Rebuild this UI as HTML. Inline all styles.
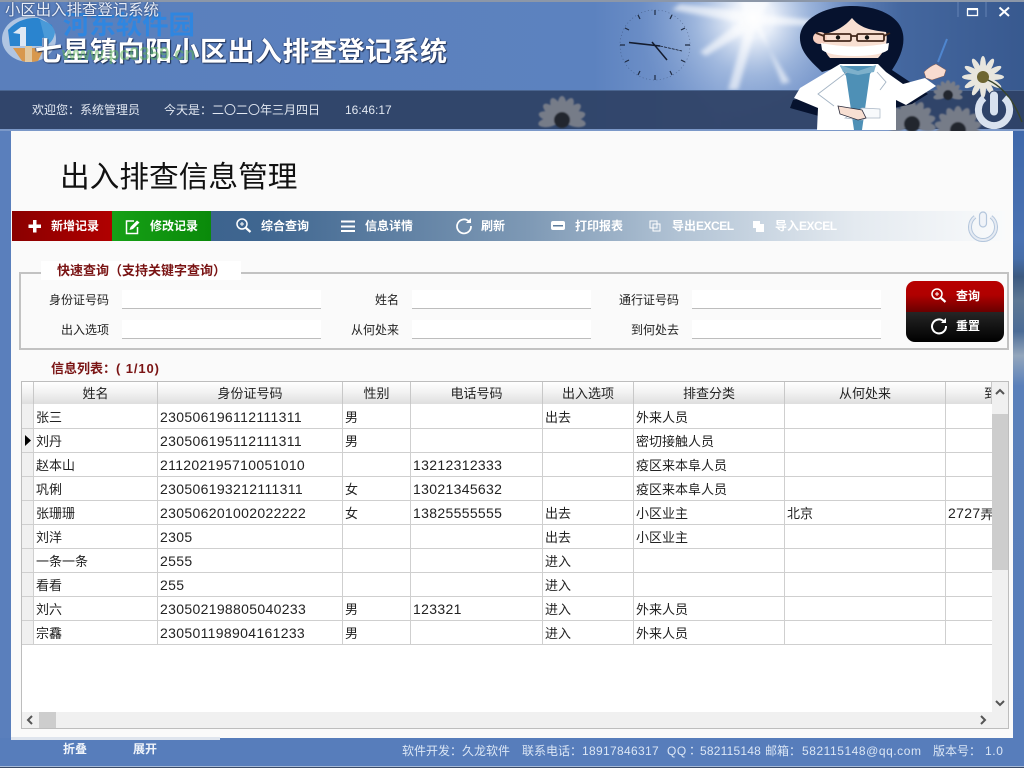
<!DOCTYPE html>
<html lang="zh"><head><meta charset="utf-8"><title>小区出入排查登记系统</title>
<style>
*{box-sizing:border-box}
html,body{margin:0;padding:0;width:1024px;height:768px;overflow:hidden;background:#577dbb;font-family:"Liberation Sans","Noto Sans CJK SC",sans-serif;color:#222}
.a{position:absolute;white-space:nowrap}
svg{position:absolute;display:block}
.p{font-family:"Noto Sans CJK TC",sans-serif}
.tb{color:#fff;font-size:12px;font-weight:bold;top:218px;line-height:16px}
.tb i{font-style:normal;letter-spacing:-.5px}
.lb{font-size:12px;color:#222;line-height:16px;text-align:right}
.fd{background:#fff;border-bottom:1px solid #bdbdbd;height:19px}
.hd{position:absolute;top:382px;height:22px;background:linear-gradient(#fff,#f1f1f1 50%,#dedede);border-right:1px solid #c8c8c8;font-size:13px;line-height:23px;text-align:center;color:#222}
.c{position:absolute;font-size:13px;line-height:26px;height:24px;color:#222;white-space:nowrap;overflow:hidden}
.c b{font-weight:normal;font-size:14px;letter-spacing:.33px;position:relative;top:-1px}
.hl{position:absolute;left:22px;width:970px;height:1px;background:#cfcfcf}
.vl{position:absolute;top:404px;height:241px;width:1px;background:#cfcfcf}
.ft{font-size:12px;color:#dbe6f5;top:743px;line-height:16px}
</style></head>
<body>
<svg style="left:0;top:0" width="1024" height="132" viewBox="0 0 1024 132">
<defs>
<linearGradient id="bg" x1="0" x2="1" y1="0" y2="0"><stop offset="0" stop-color="#5a7fbc"/><stop offset=".58" stop-color="#5c82bf"/><stop offset=".7" stop-color="#7f9dd0"/><stop offset=".8" stop-color="#6f8fc6"/><stop offset=".88" stop-color="#44679f"/><stop offset="1" stop-color="#38598f"/></linearGradient>
<radialGradient id="sun" cx="753" cy="18" r="115" gradientUnits="userSpaceOnUse"><stop offset="0" stop-color="#fff"/><stop offset=".18" stop-color="#eef3fb" stop-opacity=".95"/><stop offset=".5" stop-color="#bccfea" stop-opacity=".55"/><stop offset="1" stop-color="#88a6d4" stop-opacity="0"/></radialGradient>
<filter id="b" x="-30%" y="-30%" width="160%" height="160%"><feGaussianBlur stdDeviation="2.200"/></filter>
<filter id="s" x="-20%" y="-20%" width="140%" height="140%"><feGaussianBlur stdDeviation=".9"/></filter>
<g id="pw"><ellipse cy="-11" rx="3" ry="10" fill="#e8e6de"/></g>
<g id="daisy"><use href="#pw"/><use href="#pw" transform="rotate(30)"/><use href="#pw" transform="rotate(60)"/><use href="#pw" transform="rotate(90)"/><use href="#pw" transform="rotate(120)"/><use href="#pw" transform="rotate(150)"/><use href="#pw" transform="rotate(180)"/><use href="#pw" transform="rotate(210)"/><use href="#pw" transform="rotate(240)"/><use href="#pw" transform="rotate(270)"/><use href="#pw" transform="rotate(300)"/><use href="#pw" transform="rotate(330)"/><circle r="6" fill="#6e6632"/></g>
<g id="pd"><ellipse cy="-14" rx="4.500" ry="10" fill="#767b88"/></g>
<g id="ddaisy" filter="url(#s)"><use href="#pd"/><use href="#pd" transform="rotate(25)"/><use href="#pd" transform="rotate(50)"/><use href="#pd" transform="rotate(75)"/><use href="#pd" transform="rotate(100)"/><use href="#pd" transform="rotate(260)"/><use href="#pd" transform="rotate(285)"/><use href="#pd" transform="rotate(310)"/><use href="#pd" transform="rotate(335)"/><circle r="8" fill="#23272f"/></g>
</defs>
<rect width="1024" height="132" fill="url(#bg)"/>
<rect x="600" y="0" width="310" height="132" fill="url(#sun)"/>
<g fill="#fff" opacity=".62" filter="url(#b)">
<polygon points="748,20 728,90 738,90 758,20"/><polygon points="748,16 790,82 782,84 760,24"/><polygon points="750,12 680,4 672,10 750,24"/><polygon points="750,14 700,52 706,56 758,24"/><polygon points="752,14 815,20 815,26 752,24"/><polygon points="745,18 740,0 770,0 760,18"/>
</g>
<rect x="0" y="90" width="1024" height="40" fill="#2f4266" opacity=".94"/>
<rect x="0" y="90" width="1024" height="1" fill="#4a6590"/>
<rect x="0" y="129" width="1024" height="2" fill="#7b98c8"/>
<!-- watermark logo -->
<ellipse cx="29" cy="39" rx="27" ry="23" fill="#b9cde6" opacity=".9"/>
<path d="M8 30Q20 17 38 18L52 25 54 36 42 38V46H10Z" fill="#2a84cf"/>
<path d="M40 20Q52 22 55 32 54 42 44 47V36Z" fill="#4a9ad8"/>
<path d="M13 48H44L38 61Q30 63 22 61Z" fill="#d8984e"/>
<path d="M25 46H32V62H25Z" fill="#e2c8a0"/>
<path d="M13 33L21 27H26V46H20V34Z" fill="#dfe8f4"/>
<!-- clock -->
<g transform="translate(655,45)">
<circle r="35" fill="none" stroke="#2c3c5c" stroke-width=".6" stroke-dasharray="1 2.500" opacity=".6"/>
<g stroke="#1e2a40" stroke-width="1.200" fill="none">
<path d="M0-35v5M17-30l-2 4M30-17l-4 2M35 0h-5M30 17l-4-2M17 30l-2-4M0 35v-5M-17 30l2-4M-30 17l4-2M-35 0h5M-30-17l4 2M-17-30l2 4"/>
</g>
<path d="M-26-2.500L5 1" stroke="#141c2e" stroke-width="1.600"/>
<path d="M-3-3L12 15" stroke="#141c2e" stroke-width="1.500"/>
<path d="M5 1L27 6" stroke="#141c2e" stroke-width=".8" stroke-dasharray="3 1"/>
</g>
<!-- flowers -->
<use href="#ddaisy" x="562" y="120"/>
<use href="#ddaisy" x="912" y="124"/>
<use href="#ddaisy" x="958" y="130"/>
<use href="#ddaisy" transform="translate(948,95) scale(.62)"/>
<use href="#daisy" transform="translate(983,77)"/>
<path d="M988 80Q1010 90 1022 122" stroke="#39452c" stroke-width="1.500" fill="none"/>
<!-- doctor -->
<path d="M852 6C826 6 802 18 800 36C799 52 812 62 822 72L836 68 830 92 793 100 790 108 826 118 885 110 912 104 928 94 892 70C900 58 905 46 903 34C900 16 878 6 852 6Z" fill="#06122e"/>
<path d="M852 18C845 26 836 32 824 34C822 42 824 52 830 58H878C886 50 888 40 886 32C870 30 860 28 852 18Z" fill="#f8dfd2"/>
<ellipse cx="820" cy="38" rx="7" ry="6" fill="#f6cfc0"/>
<path d="M821 43Q855 50 889 43L888 50Q880 56 855 56Q830 56 822 50Z" fill="#fff"/>
<g fill="none" stroke="#43281c" stroke-width="1.800"><rect x="824" y="34" width="27" height="7" rx="1.500"/><rect x="857" y="34" width="27" height="7" rx="1.500"/><path d="M851 36h6M816 33l8 3M884 36l6-3"/></g>
<circle cx="838" cy="37.500" r="2.200" fill="#111"/><circle cx="867" cy="37.500" r="2.200" fill="#111"/>
<path d="M840 64L878 64 886 72 903 84 925 78 936 86 906 105 896 100 896 130H817L818 108 794 98 800 88Z" fill="#fff"/>
<path d="M840 66H876L870 74 862 130H854L846 76Z" fill="#4e90b6"/>
<path d="M840 65L858 71 876 65 874 72 858 75 843 72Z" fill="#7db0cb"/>
<path d="M847 72L818 94 834 106M877 72L886 82 880 90" stroke="#a4b4c4" stroke-width=".9" fill="none"/>
<path d="M845 118L862 108 880 109V118H866L862 120Z" fill="#f8fafc" stroke="#a8b5c4" stroke-width=".7"/>
<path d="M838 106Q850 108 862 110L866 118 858 120 840 114Z" fill="#f8dfd2" stroke="#2a2a3a" stroke-width=".8"/>
<path d="M924 72Q930 66 936 64L946 70 944 76 932 80 926 78Z" fill="#f8dcd0" stroke="#8a5e50" stroke-width=".5"/>
<path d="M938 62L947 39" stroke="#4f86cf" stroke-width="2"/>
<!-- power -->
<path d="M984 98A15.600 15.600 0 1 0 1004 98" fill="none" stroke="#d9e2ef" stroke-width="7"/>
<rect x="989.500" y="91" width="9" height="25" rx="4.500" fill="#d9e2ef" stroke="#2f4266" stroke-width="1"/>
<!-- window controls -->
<path d="M958 2V17M986 2V17" stroke="#6f8cbd" stroke-width=".8"/>
<rect x="967.500" y="9.500" width="10" height="6" fill="none" stroke="#fff" stroke-width="1.300"/><path d="M967 9h11" stroke="#fff" stroke-width="2"/>
<path d="M999.500 7.500L1009 16M1009 7.500L999.500 16" stroke="#fff" stroke-width="2"/>
<path d="M0 1H1024" stroke="#8c97a8" stroke-width="2"/>
</svg>

<div class="a" style="left:63px;top:7px;font-size:26.400px;line-height:36px;font-weight:bold;color:#2f86e0">河东软件园</div>
<div class="a" style="left:5px;top:1px;font-size:15.400px;line-height:20px;color:#e8eef8;text-shadow:0 0 2px #26365a">小区出入排查登记系统</div>
<div class="a" style="left:35px;top:33px;font-size:27px;line-height:38px;color:#fff;font-weight:bold;letter-spacing:.5px;text-shadow:1px 1px 1px #1e2e50,-1px 0 1px #3a5288">七星镇向阳小区出入排查登记系统</div>
<div class="a" style="left:62px;top:44px;font-size:18px;line-height:20px;font-weight:bold;color:#5fb25a;opacity:.55">www.pc0359.cn</div>
<div class="a" style="left:32px;top:102px;font-size:12px;line-height:16px;color:#e2e8f2">欢迎您<span class="p">：</span>系统管理员</div>
<div class="a" style="left:164px;top:102px;font-size:12px;line-height:16px;color:#e2e8f2">今天是<span class="p">：</span>二〇二〇年三月四日</div>
<div class="a" style="left:345px;top:102px;font-size:12px;line-height:16px;color:#e2e8f2">16:46:17</div>

<div class="a" style="left:0;top:131px;width:11px;height:607px;background:#5a7fbc"></div>
<div class="a" style="left:1013px;top:131px;width:11px;height:607px;background:linear-gradient(#3f68aa,#4a72b2 18%,#476ea8 21%,#3d5a80 24%,#5e7894 28%,#4c6c96 33%,#93a6bc 37%,#5a80ba 42%,#577dbb)"></div>
<div class="a" style="left:11px;top:131px;width:1002px;height:607px;background:#fafafa"></div>
<div class="a" style="left:11px;top:737px;width:209px;height:3px;background:#dfe5ee"></div>

<div class="a" style="left:60px;top:158px;font-size:29.700px;line-height:40px;color:#111">出入排查信息管理</div>

<div class="a" style="left:12px;top:211px;width:993px;height:30px;background:linear-gradient(90deg,#345a87 0,#3f6690 25%,#7e99b5 52%,#b4c5d6 68%,#e4eaf0 85%,#f9fafb 100%)"></div>
<div class="a" style="left:12px;top:211px;width:100px;height:30px;background:linear-gradient(90deg,#8a0000,#b00000)"></div>
<div class="a" style="left:112px;top:211px;width:99px;height:30px;background:linear-gradient(90deg,#16a016,#0a8a0a)"></div>
<svg style="left:26px;top:217px" width="16" height="18"><path d="M7 3H10.500V7.500H15V11H10.500V15.500H7V11H2.500V7.500H7Z" fill="#fff"/></svg>
<div class="a tb" style="left:51px">新增记录</div>
<svg style="left:124px;top:218px" width="18" height="18"><path d="M10 3H2.500V15.500H13.500V9" fill="none" stroke="#fff" stroke-width="1.500"/><path d="M5.500 12L6.500 9 13 2.500 15.500 4.500 9 11Z" fill="#fff"/></svg>
<div class="a tb" style="left:150px">修改记录</div>
<svg style="left:235px;top:217px" width="18" height="18"><circle cx="7" cy="7" r="5" fill="none" stroke="#fff" stroke-width="1.500"/><path d="M5 7h4M7 5v4" stroke="#fff"/><path d="M11 11l4.500 4" stroke="#fff" stroke-width="2.200"/></svg>
<div class="a tb" style="left:261px">综合查询</div>
<svg style="left:340px;top:218px" width="16" height="16"><path d="M1 3.500H15M1 8.500H15M1 13H15" stroke="#fff" stroke-width="2"/></svg>
<div class="a tb" style="left:365px">信息详情</div>
<svg style="left:455px;top:217px" width="18" height="18"><path d="M14 4.500A7 7 0 1 0 16 9" fill="none" stroke="#fff" stroke-width="1.700"/><path d="M16 1V6H11Z" fill="#fff"/></svg>
<div class="a tb" style="left:481px">刷新</div>
<svg style="left:550px;top:219px" width="16" height="14"><rect x="1" y="2" width="14" height="9" rx="2" fill="#fff"/><rect x="3" y="6" width="10" height="1.500" fill="#5d7c9c"/></svg>
<div class="a tb" style="left:575px">打印报表</div>
<svg style="left:649px;top:220px" width="12" height="12"><rect x="1" y="1" width="7" height="7" fill="none" stroke="#fff"/><rect x="4" y="4" width="7" height="7" fill="none" stroke="#fff"/></svg>
<div class="a tb" style="left:672px">导出<i>EXCEL</i></div>
<svg style="left:752px;top:220px" width="13" height="13"><rect x="1" y="1" width="7" height="7" fill="#fff"/><rect x="4" y="4" width="8" height="8" fill="#fff"/></svg>
<div class="a tb" style="left:775px">导入<i>EXCEL</i></div>
<svg style="left:967px;top:211px" width="32" height="31"><path d="M8 5.800A13 13 0 1 0 24 5.800" fill="none" stroke="#b4c6dc" stroke-width="4"/><path d="M8 5.800A13 13 0 1 0 24 5.800" fill="none" stroke="#e6ebf3" stroke-width="2"/><rect x="12.500" y="1" width="7" height="15" rx="3.500" fill="#f0f3f8" stroke="#b4c6dc" stroke-width="1.200"/></svg>

<div class="a" style="left:19px;top:272px;width:990px;height:78px;border:2px solid #c2c2c2"></div>
<div class="a" style="left:41px;top:261px;width:200px;height:19px;background:#fff;font-size:13px;font-weight:bold;color:#7a1414;line-height:19px;padding-left:16px">快速查询（支持关键字查询）</div>

<div class="a lb" style="left:39px;top:292px;width:70px">身份证号码</div>
<div class="a fd" style="left:122px;top:290px;width:199px"></div>
<div class="a lb" style="left:339px;top:292px;width:60px">姓名</div>
<div class="a fd" style="left:412px;top:290px;width:179px"></div>
<div class="a lb" style="left:599px;top:292px;width:80px">通行证号码</div>
<div class="a fd" style="left:692px;top:290px;width:189px"></div>
<div class="a lb" style="left:39px;top:322px;width:70px">出入选项</div>
<div class="a fd" style="left:122px;top:320px;width:199px"></div>
<div class="a lb" style="left:339px;top:322px;width:60px">从何处来</div>
<div class="a fd" style="left:412px;top:320px;width:179px"></div>
<div class="a lb" style="left:599px;top:322px;width:80px">到何处去</div>
<div class="a fd" style="left:692px;top:320px;width:189px"></div>

<div class="a" style="left:906px;top:281px;width:98px;height:31px;border-radius:9px 9px 0 0;background:linear-gradient(#b80000,#b00000 45%,#6a0000)"></div>
<div class="a" style="left:906px;top:312px;width:98px;height:30px;border-radius:0 0 9px 9px;background:linear-gradient(#262626,#000)"></div>
<svg style="left:930px;top:287px" width="18" height="18"><circle cx="7" cy="7" r="5" fill="none" stroke="#fff" stroke-width="1.500"/><path d="M5 7h4M7 5v4" stroke="#fff"/><path d="M11 11l4.500 4" stroke="#fff" stroke-width="2.200"/></svg>
<div class="a tb" style="left:956px;top:288px">查询</div>
<svg style="left:930px;top:317px" width="18" height="18"><path d="M14 4.500A7 7 0 1 0 16 9" fill="none" stroke="#fff" stroke-width="2"/><path d="M16 1V6H11Z" fill="#fff"/></svg>
<div class="a tb" style="left:956px;top:318px">重置</div>

<div class="a" style="left:51px;top:359px;font-size:13px;line-height:17px;font-weight:bold;color:#7a1414">信息列表<span class="p">：</span><span style="letter-spacing:.9px">( 1/10)</span></div>

<div class="a" style="left:21px;top:381px;width:988px;height:348px;background:#fff;border:1px solid #bdbdbd"></div>
<div class="a" style="left:22px;top:382px;width:12px;height:263px;background:#f0f0f0;border-right:1px solid #cfcfcf"></div>
<div class="hd" style="left:22px;width:12px"></div>
<div class="hd" style="left:34px;width:124px">姓名</div>
<div class="hd" style="left:158px;width:185px">身份证号码</div>
<div class="hd" style="left:343px;width:68px">性别</div>
<div class="hd" style="left:411px;width:132px">电话号码</div>
<div class="hd" style="left:543px;width:91px">出入选项</div>
<div class="hd" style="left:634px;width:151px">排查分类</div>
<div class="hd" style="left:785px;width:161px">从何处来</div>
<div class="hd" style="left:946px;width:46px;text-align:left;padding-left:38px;overflow:hidden">到何处去</div>

<div class="hl" style="top:428px"></div><div class="hl" style="top:452px"></div><div class="hl" style="top:476px"></div><div class="hl" style="top:500px"></div><div class="hl" style="top:524px"></div><div class="hl" style="top:548px"></div><div class="hl" style="top:572px"></div><div class="hl" style="top:596px"></div><div class="hl" style="top:620px"></div><div class="hl" style="top:644px"></div>
<div class="vl" style="left:157px"></div><div class="vl" style="left:342px"></div><div class="vl" style="left:410px"></div><div class="vl" style="left:542px"></div><div class="vl" style="left:633px"></div><div class="vl" style="left:784px"></div><div class="vl" style="left:945px"></div>
<svg style="left:24px;top:435px" width="8" height="12"><path d="M1 0L7 5.500 1 11Z" fill="#000"/></svg>

<div class="c" style="left:36px;top:405px">张三</div><div class="c" style="left:160px;top:405px"><b>230506196112111311</b></div><div class="c" style="left:345px;top:405px">男</div><div class="c" style="left:545px;top:405px">出去</div><div class="c" style="left:636px;top:405px">外来人员</div>
<div class="c" style="left:36px;top:429px">刘丹</div><div class="c" style="left:160px;top:429px"><b>230506195112111311</b></div><div class="c" style="left:345px;top:429px">男</div><div class="c" style="left:636px;top:429px">密切接触人员</div>
<div class="c" style="left:36px;top:453px">赵本山</div><div class="c" style="left:160px;top:453px"><b>211202195710051010</b></div><div class="c" style="left:413px;top:453px"><b>13212312333</b></div><div class="c" style="left:636px;top:453px">疫区来本阜人员</div>
<div class="c" style="left:36px;top:477px">巩俐</div><div class="c" style="left:160px;top:477px"><b>230506193212111311</b></div><div class="c" style="left:345px;top:477px">女</div><div class="c" style="left:413px;top:477px"><b>13021345632</b></div><div class="c" style="left:636px;top:477px">疫区来本阜人员</div>
<div class="c" style="left:36px;top:501px">张珊珊</div><div class="c" style="left:160px;top:501px"><b>230506201002022222</b></div><div class="c" style="left:345px;top:501px">女</div><div class="c" style="left:413px;top:501px"><b>13825555555</b></div><div class="c" style="left:545px;top:501px">出去</div><div class="c" style="left:636px;top:501px">小区业主</div><div class="c" style="left:787px;top:501px">北京</div><div class="c" style="left:948px;top:501px;width:44px"><b>2727</b>弄</div>
<div class="c" style="left:36px;top:525px">刘洋</div><div class="c" style="left:160px;top:525px"><b>2305</b></div><div class="c" style="left:545px;top:525px">出去</div><div class="c" style="left:636px;top:525px">小区业主</div>
<div class="c" style="left:36px;top:549px">一条一条</div><div class="c" style="left:160px;top:549px"><b>2555</b></div><div class="c" style="left:545px;top:549px">进入</div>
<div class="c" style="left:36px;top:573px">看看</div><div class="c" style="left:160px;top:573px"><b>255</b></div><div class="c" style="left:545px;top:573px">进入</div>
<div class="c" style="left:36px;top:597px">刘六</div><div class="c" style="left:160px;top:597px"><b>230502198805040233</b></div><div class="c" style="left:345px;top:597px">男</div><div class="c" style="left:413px;top:597px"><b>123321</b></div><div class="c" style="left:545px;top:597px">进入</div><div class="c" style="left:636px;top:597px">外来人员</div>
<div class="c" style="left:36px;top:621px">宗馫</div><div class="c" style="left:160px;top:621px"><b>230501198904161233</b></div><div class="c" style="left:345px;top:621px">男</div><div class="c" style="left:545px;top:621px">进入</div><div class="c" style="left:636px;top:621px">外来人员</div>

<div class="a" style="left:992px;top:382px;width:16px;height:330px;background:#f0f0f0"></div>
<div class="a" style="left:992px;top:414px;width:16px;height:156px;background:#cdcdcd"></div>
<div class="a" style="left:22px;top:712px;width:986px;height:16px;background:#f0f0f0"></div>
<div class="a" style="left:39px;top:712px;width:17px;height:16px;background:#cdcdcd"></div>
<svg style="left:993px;top:387px" width="14" height="10"><path d="M3 7L7 3 11 7" fill="none" stroke="#555" stroke-width="2"/></svg>
<svg style="left:993px;top:698px" width="14" height="10"><path d="M3 3L7 7 11 3" fill="none" stroke="#555" stroke-width="2"/></svg>
<svg style="left:25px;top:714px" width="10" height="12"><path d="M7 2L3 6 7 10" fill="none" stroke="#555" stroke-width="2"/></svg>
<svg style="left:978px;top:714px" width="10" height="12"><path d="M3 2L7 6 3 10" fill="none" stroke="#555" stroke-width="2"/></svg>

<div class="a" style="left:63px;top:741px;font-size:12px;line-height:16px;font-weight:bold;color:#f0f4fa">折叠</div>
<div class="a" style="left:133px;top:741px;font-size:12px;line-height:16px;font-weight:bold;color:#f0f4fa">展开</div>
<div class="a ft" style="left:402px">软件开发<span class="p">：</span>久龙软件</div>
<div class="a ft" style="left:522px">联系电话<span class="p">：</span></div>
<div class="a ft" style="left:582px;letter-spacing:.33px">18917846317</div>
<div class="a ft" style="left:667px;letter-spacing:.6px">QQ</div>
<div class="a ft" style="left:686px"><span class="p">：</span></div>
<div class="a ft" style="left:700px;letter-spacing:.2px">582115148</div>
<div class="a ft" style="left:765px">邮箱<span class="p">：</span></div>
<div class="a ft" style="left:802px;letter-spacing:.55px">582115148@qq.com</div>
<div class="a ft" style="left:933px">版本号<span class="p">：</span></div>
<div class="a ft" style="left:985px;letter-spacing:.6px">1.0</div>
<div class="a" style="left:0;top:766px;width:1024px;height:1px;background:#a8bbd8"></div>
<div class="a" style="left:0;top:767px;width:1024px;height:1px;background:#3a4a66"></div>
</body></html>
